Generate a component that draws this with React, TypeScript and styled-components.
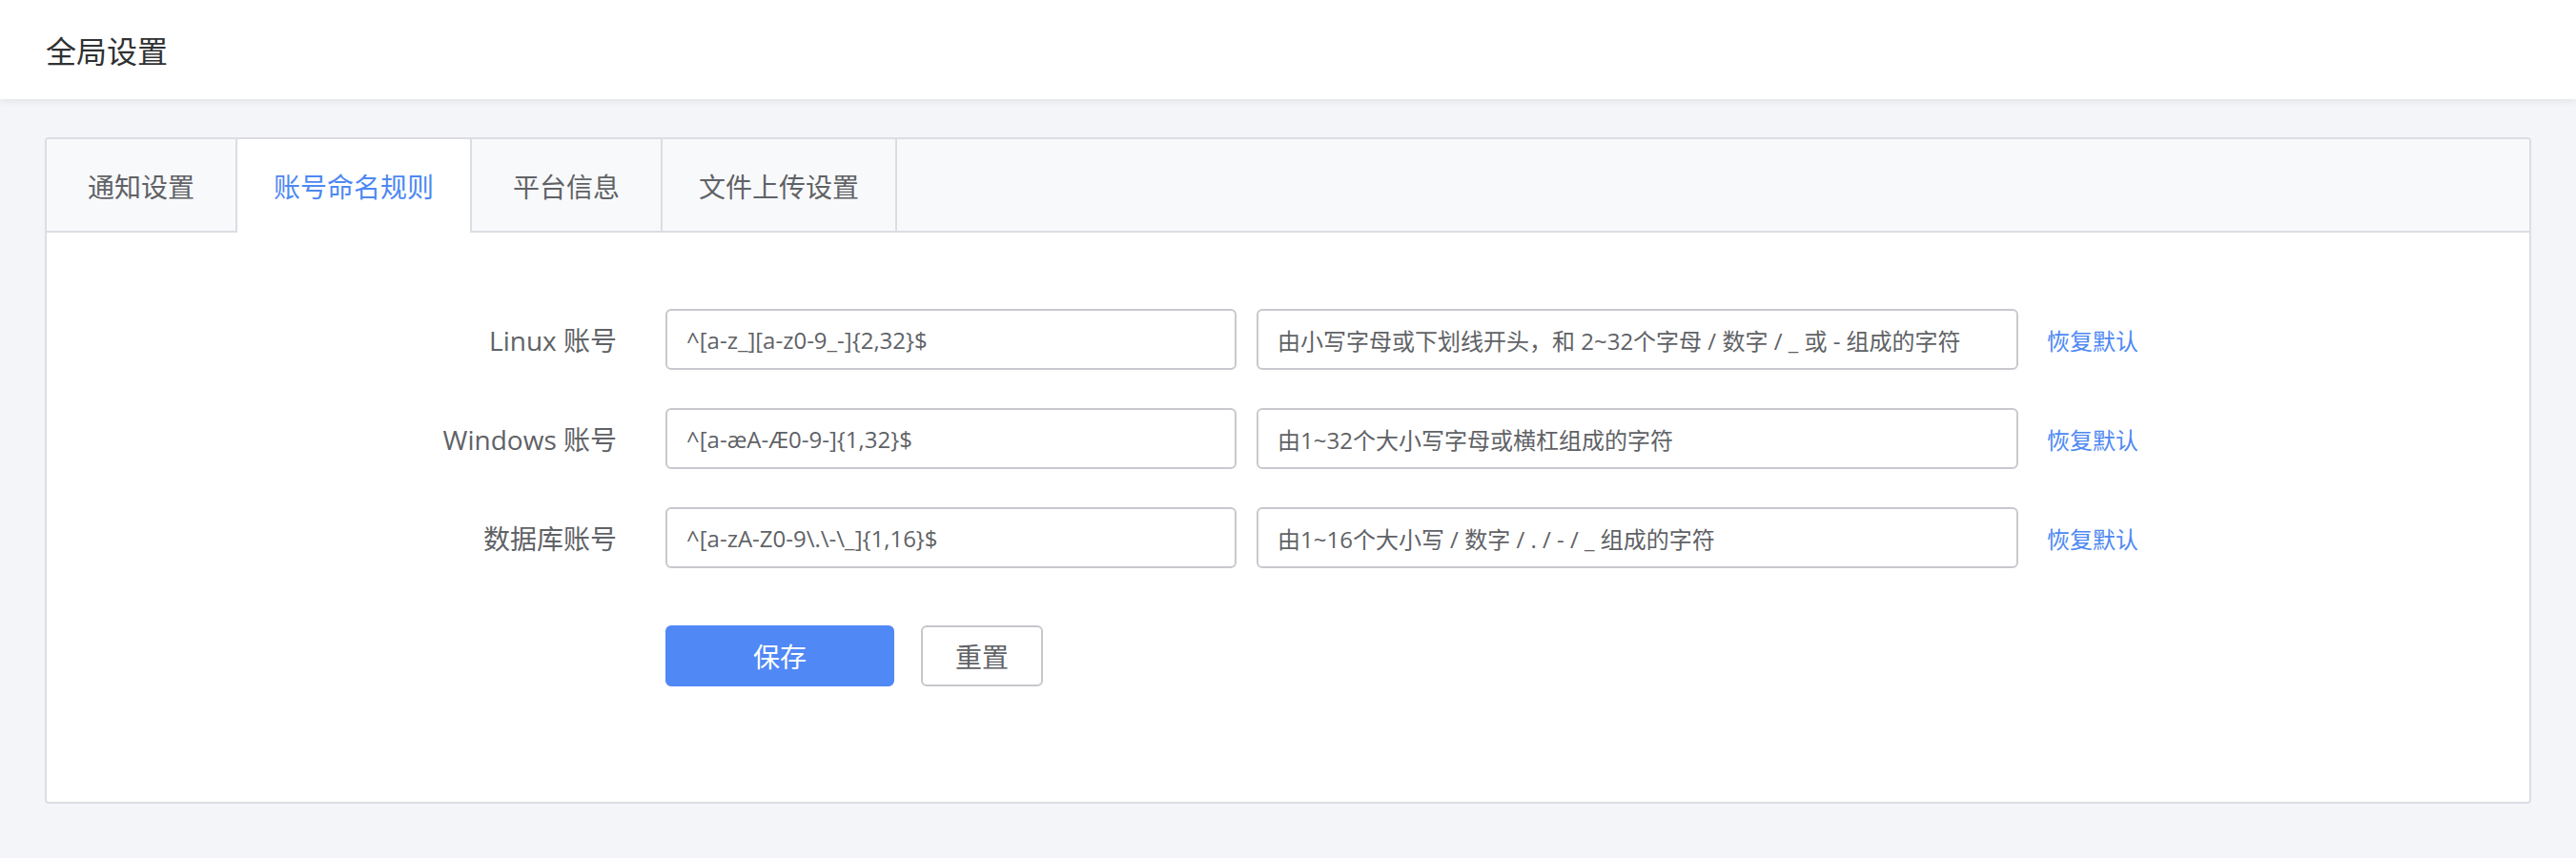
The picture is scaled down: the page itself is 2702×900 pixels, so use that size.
import styled, { createGlobalStyle } from "styled-components";

const colors = {
  page: "#f4f5f9",
  border: "#dcdde3",
  inputBorder: "#c8c9ce",
  text: "#606266",
  title: "#303133",
  primary: "#5088f6",
  link: "#4d88f3",
  tabBar: "#f8f9fb",
};

const GlobalStyle = createGlobalStyle`
  html, body {
    margin: 0;
    padding: 0;
    background: ${colors.page};
    font-family: "Open Sans", "Noto Sans CJK SC", sans-serif;
  }
  * {
    box-sizing: border-box;
  }
`;

const Page = styled.div`
  min-height: 900px;
  background: ${colors.page};
`;

const Header = styled.header`
  height: 104px;
  display: flex;
  align-items: center;
  padding-left: 48px;
  background: #fff;
  box-shadow: 0 2px 8px rgba(0, 0, 0, 0.08);
  position: relative;
  z-index: 1;
`;

const Title = styled.h1`
  margin: 0;
  font-size: 32px;
  font-weight: 400;
  color: ${colors.title};
`;

const Main = styled.main`
  padding: 40px 47px 57px 47px;
`;

const Card = styled.section`
  border: 2px solid ${colors.border};
  border-radius: 4px;
  background: #fff;
  overflow: hidden;
  height: 699px;
`;

const TabBar = styled.div`
  display: flex;
  height: 98px;
  background: ${colors.tabBar};
  border-bottom: 2px solid ${colors.border};
`;

const Tab = styled.div<{ $active?: boolean }>`
  min-width: 200px;
  height: 98px;
  padding: 0 38px;
  display: flex;
  align-items: center;
  justify-content: center;
  font-size: 28px;
  border-right: 2px solid ${colors.border};
  color: ${(p) => (p.$active ? colors.link : colors.text)};
  background: ${(p) => (p.$active ? "#fff" : "transparent")};
  cursor: pointer;
`;

const Form = styled.div`
  padding-top: 80px;
  display: flex;
  flex-direction: column;
  gap: 40px;
`;

const Row = styled.div`
  display: flex;
  align-items: center;
  height: 64px;
`;

const Label = styled.label`
  flex: 0 0 598px;
  text-align: right;
  margin-right: 51px;
  font-size: 28px;
  color: ${colors.text};
`;

const Input = styled.input<{ $width: number }>`
  width: ${(p) => p.$width}px;
  height: 64px;
  padding: 0 20px;
  border: 2px solid ${colors.inputBorder};
  border-radius: 6px;
  font-family: inherit;
  font-size: 24px;
  color: ${colors.text};
  background: #fff;
  outline: none;
`;

const DescInput = styled(Input)`
  margin-left: 21px;
`;

const ResetLink = styled.a`
  margin-left: 30px;
  font-size: 24px;
  color: ${colors.link};
  text-decoration: none;
  cursor: pointer;
`;

const Actions = styled.div`
  display: flex;
  gap: 28px;
  margin-top: 20px;
  padding-left: 649px;
`;

const Button = styled.button<{ $primary?: boolean }>`
  height: 64px;
  width: ${(p) => (p.$primary ? "240px" : "128px")};
  border-radius: 6px;
  font-family: inherit;
  font-size: 28px;
  cursor: pointer;
  border: 2px solid ${(p) => (p.$primary ? colors.primary : "#c6c7cc")};
  background: ${(p) => (p.$primary ? colors.primary : "#fff")};
  color: ${(p) => (p.$primary ? "#fff" : colors.text)};
`;

const rules = [
  {
    label: "Linux 账号",
    pattern: "^[a-z_][a-z0-9_-]{2,32}$",
    desc: "由小写字母或下划线开头，和 2~32个字母 / 数字 / _ 或 - 组成的字符",
  },
  {
    label: "Windows 账号",
    pattern: "^[a-æA-Æ0-9-]{1,32}$",
    desc: "由1~32个大小写字母或横杠组成的字符",
  },
  {
    label: "数据库账号",
    pattern: "^[a-zA-Z0-9\\.\\-\\_]{1,16}$",
    desc: "由1~16个大小写 / 数字 / . / - / _ 组成的字符",
  },
];

const tabs = ["通知设置", "账号命名规则", "平台信息", "文件上传设置"];

export default function App() {
  return (
    <Page>
      <GlobalStyle />
      <Header>
        <Title>全局设置</Title>
      </Header>
      <Main>
        <Card>
          <TabBar>
            {tabs.map((t, i) => (
              <Tab key={t} $active={i === 1}>
                {t}
              </Tab>
            ))}
          </TabBar>
          <Form>
            {rules.map((r) => (
              <Row key={r.label}>
                <Label>{r.label}</Label>
                <Input $width={599} defaultValue={r.pattern} />
                <DescInput $width={799} defaultValue={r.desc} />
                <ResetLink>恢复默认</ResetLink>
              </Row>
            ))}
            <Actions>
              <Button $primary>保存</Button>
              <Button>重置</Button>
            </Actions>
          </Form>
        </Card>
      </Main>
    </Page>
  );
}
